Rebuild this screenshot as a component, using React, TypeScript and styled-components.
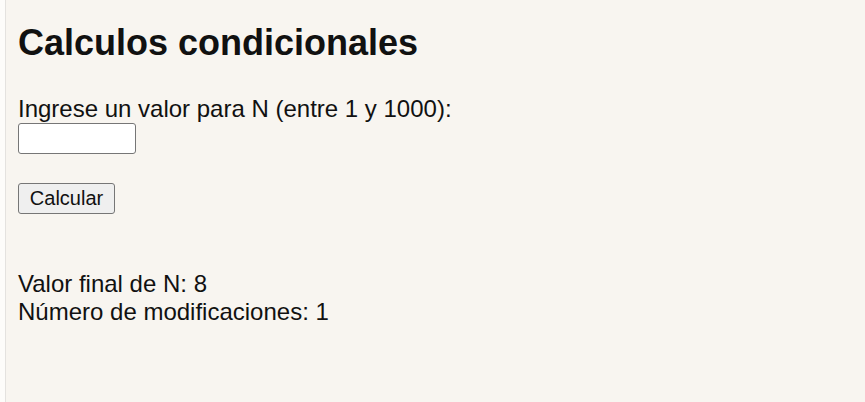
import React from "react";
import styled, { createGlobalStyle } from "styled-components";

const Global = createGlobalStyle`
  html, body { margin: 0; padding: 0; }
  body {
    background: #f8f5f0;
    font-family: "Liberation Sans", Arial, sans-serif;
    color: #111111;
  }
`;

const Frame = styled.div`
  display: flex;
  min-height: 402px;
`;

const EdgeStrip = styled.div`
  width: 5px;
  flex: none;
  background: #fdfcfa;
  border-right: 1px solid #e4e2df;
`;

const Content = styled.main`
  flex: 1;
  display: flex;
  flex-direction: column;
  align-items: flex-start;
  padding: 22px 0 0 12px;
`;

const Title = styled.h1`
  margin: 0;
  font-size: 36px;
  line-height: 41px;
  font-weight: 700;
  color: #111111;
`;

const Label = styled.label`
  margin-top: 32px;
  font-size: 24px;
  line-height: 28px;
`;

const NumberInput = styled.input`
  box-sizing: border-box;
  width: 118px;
  height: 31px;
  margin: 0;
  padding: 1px 3px;
  border: 1px solid #767676;
  border-radius: 3px;
  background: #ffffff;
  font-family: inherit;
  font-size: 20px;
`;

const Button = styled.button`
  box-sizing: border-box;
  margin-top: 29px;
  width: 97px;
  height: 31px;
  padding: 0;
  border: 1px solid #767676;
  border-radius: 3px;
  background: #efefef;
  color: #111111;
  font-family: inherit;
  font-size: 20px;
  line-height: 23px;
  text-align: center;
`;

const Results = styled.div`
  margin-top: 56px;
  display: flex;
  flex-direction: column;
  font-size: 24px;
  line-height: 28px;
`;

const ResultLine = styled.div``;

export default function App() {
  return (
    <>
      <Global />
      <Frame>
        <EdgeStrip />
        <Content>
          <Title>Calculos condicionales</Title>
          <Label htmlFor="n">Ingrese un valor para N (entre 1 y 1000):</Label>
          <NumberInput id="n" type="text" />
          <Button type="button">Calcular</Button>
          <Results>
            <ResultLine>Valor final de N: 8</ResultLine>
            <ResultLine>Número de modificaciones: 1</ResultLine>
          </Results>
        </Content>
      </Frame>
    </>
  );
}
